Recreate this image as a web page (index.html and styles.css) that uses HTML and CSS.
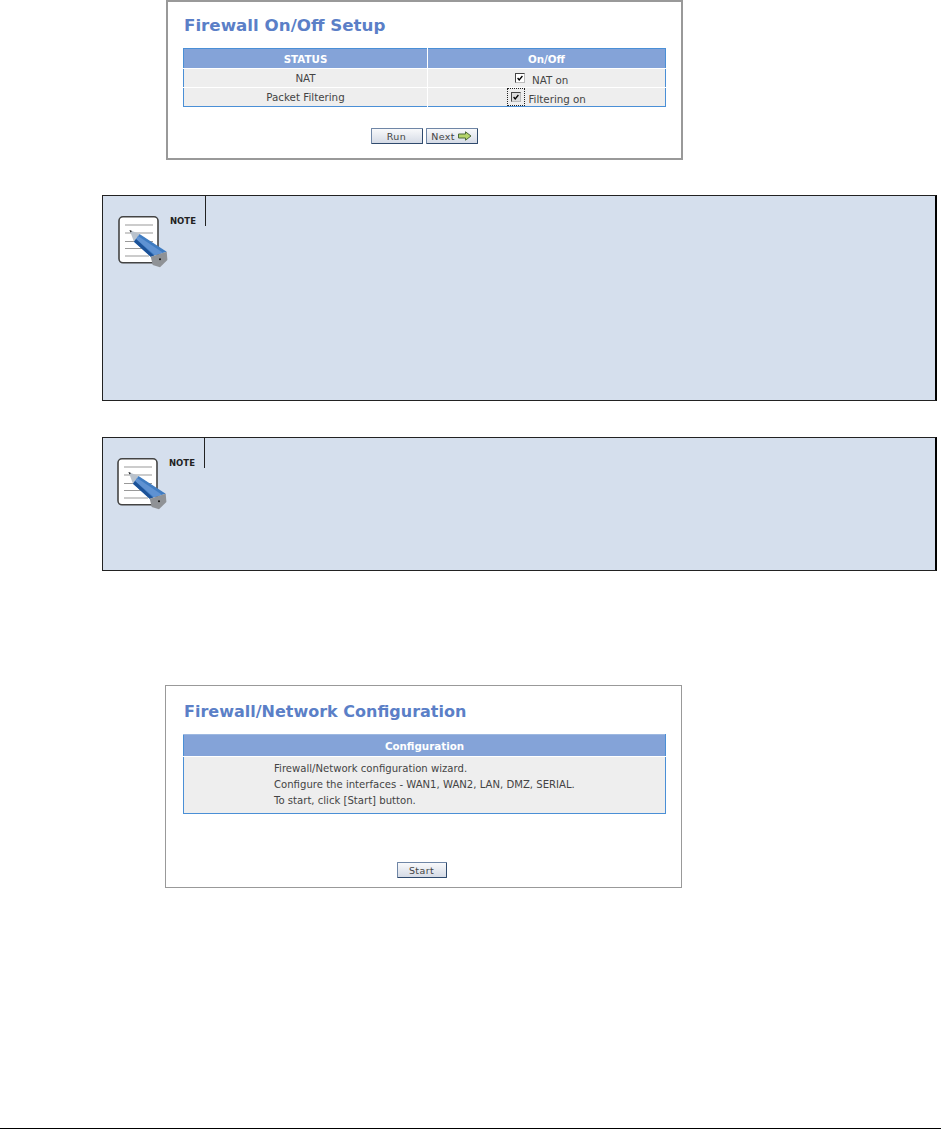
FILE: index.html
```html
<!DOCTYPE html>
<html>
  <head>
    <title>Firewall Setup</title>
    <meta charset="utf-8" />
    <link rel="stylesheet" href="styles.css">
  </head>
  <body>
    <svg class="defs" width="0" height="0">
      <symbol id="noteIcon" viewBox="0 0 52 52">
        <rect x="1" y="0.8" width="39" height="46" rx="4" fill="#fff" stroke="#444" stroke-width="1.6" />
        <path d="M7 9H35M7 17H35M7 25.5H35M7 32.5H35M7 40H31" stroke="#999" stroke-width="1" />
        <path d="M11.5 14L21.5 18L16 25.7Z" fill="#b9c2cc" />
        <path d="M11.5 14L14 15L12.5 16.5Z" fill="#222" />
        <path d="M21.5 18L48.7 35.7L32.7 40.7L16 25.7Z" fill="#3f7cc2" />
        <path d="M20 20L45 36.8L37 39.2L18 23Z" fill="#5f92d2" />
        <path d="M16 25.7L32.7 40.7L36 39.7L18 23Z" fill="#1c5298" />
        <path d="M48.7 35.7L49.4 44L42 51.3L34.7 49L32.7 40.7Z" fill="#8f9296" />
        <circle cx="42" cy="43.3" r="1" fill="#111" />
      </symbol>
    </svg>

    <div class="panel panel-firewall">
      <h2 class="panel-title">Firewall On/Off Setup</h2>
      <table class="grid grid-status">
        <thead>
          <tr>
            <th>STATUS</th>
            <th>On/Off</th>
          </tr>
        </thead>
        <tbody>
          <tr>
            <td>NAT</td>
            <td>
              <span class="check">
                <svg class="check-box" width="10" height="10" viewBox="0 0 10 10">
                  <path d="M2 5L4 7.5L8 2.5" fill="none" stroke="#000" stroke-width="1.6" />
                </svg>
              </span>
              <span class="check-text check-label">NAT on</span>
            </td>
          </tr>
          <tr>
            <td>Packet Filtering</td>
            <td>
              <span class="check check-focus">
                <svg class="check-box" width="10" height="10" viewBox="0 0 10 10">
                  <path d="M2 5L4 7.5L8 2.5" fill="none" stroke="#000" stroke-width="1.6" />
                </svg>
              </span>
              <span class="check-text">Filtering on</span>
            </td>
          </tr>
        </tbody>
      </table>
      <div class="actions">
        <button class="btn" type="button">Run</button>
        <button class="btn" type="button">
          Next
          <svg class="btn-arrow" width="14" height="10" viewBox="0 0 14 10">
            <path d="M0.5 3H7.5V0.8L13 5L7.5 9.2V7H0.5Z" fill="#b5d56a" stroke="#4d6a3a" />
          </svg>
        </button>
      </div>
    </div>

    <div class="note note-long">
      <div class="note-head">
        <svg class="note-icon" width="52" height="52"><use href="#noteIcon" /></svg>
        <span class="note-label">NOTE</span>
      </div>
    </div>

    <div class="note note-short">
      <div class="note-head">
        <svg class="note-icon" width="52" height="52"><use href="#noteIcon" /></svg>
        <span class="note-label">NOTE</span>
      </div>
    </div>

    <div class="panel panel-config">
      <h2 class="panel-title">Firewall/Network Configuration</h2>
      <table class="grid grid-config">
        <thead>
          <tr>
            <th>Configuration</th>
          </tr>
        </thead>
        <tbody>
          <tr>
            <td>
              <p>Firewall/Network configuration wizard.</p>
              <p>Configure the interfaces - WAN1, WAN2, LAN, DMZ, SERIAL.</p>
              <p>To start, click [Start] button.</p>
            </td>
          </tr>
        </tbody>
      </table>
      <div class="actions">
        <button class="btn" type="button">Start</button>
      </div>
    </div>

    <hr class="page-rule" />
  </body>
</html>
```

FILE: styles.css
```css
html {
  height: 100%;
}

body {
  margin: 0;
  min-height: 100%;
  display: flex;
  flex-direction: column;
  background: #fff;
  color: #444;
  font-family: "DejaVu Sans", Verdana, sans-serif;
  font-size: 10.3px;
}

.defs {
  display: block;
  height: 0;
}

/* Panels */

.panel {
  box-sizing: border-box;
  width: 517px;
  border: 1px solid #999;
  background: #fff;
  padding: 0 17px;
}

.panel-firewall {
  height: 160px;
  margin-left: 166px;
  border-width: 2px;
  padding: 0 15px;
}

.panel-config {
  height: 203px;
  margin: 114px 0 0 165px;
}

.panel-title {
  margin: 0;
  padding-left: 1px;
  color: #5b7fc7;
  font-size: 16.7px;
  line-height: 20px;
}

.panel-firewall .panel-title {
  padding-top: 13px;
}

.panel-config .panel-title {
  padding-top: 16px;
  font-size: 16px;
}

/* Tables */

.grid {
  border-collapse: collapse;
  border: 1px solid #4a8fd6;
}

.grid th {
  padding: 0;
  background: #84a3d8;
  color: #fff;
  font-weight: bold;
  text-align: center;
}

.grid td {
  padding: 0;
  background: #eee;
  text-align: center;
  border-top: 1px solid #fff;
}

.grid-status {
  width: 483px;
  margin-top: 13px;
}

.grid-status th {
  height: 19px;
}

.grid-status th + th,
.grid-status td + td {
  border-left: 1px solid #fff;
}

.grid-status th:first-child,
.grid-status td:first-child {
  width: 243px;
}

.grid-status td {
  height: 18px;
}

.grid-config {
  width: 483px;
  margin-top: 12px;
  border-top-color: #9db8e0;
}

.grid-config th {
  height: 21px;
}

.grid-config td {
  height: 56px;
  padding-left: 90px;
  text-align: left;
}

.grid-config p {
  margin: 0;
  font-size: 10.1px;
  line-height: 16px;
}

/* Checkboxes */

.check {
  display: inline-flex;
  align-items: center;
  justify-content: center;
  width: 18px;
  height: 18px;
  vertical-align: middle;
}

.check-focus {
  outline: 1px dotted #222;
  outline-offset: -1px;
}

.check-box {
  box-sizing: border-box;
  border: 1px solid #444;
  border-right-color: #bbb;
  border-bottom-color: #bbb;
  background: #fff;
}

.check-focus .check-box {
  background: #ddd;
}

.check-text {
  display: inline-block;
  padding-top: 3px;
  vertical-align: middle;
}

.check-label {
  margin-right: 14px;
}

/* Buttons */

.actions {
  display: flex;
  justify-content: center;
  gap: 3px;
}

.panel-firewall .actions {
  margin-top: 21px;
  padding-right: 1px;
}

.panel-config .actions {
  margin-top: 48px;
  padding-right: 4px;
}

.btn {
  box-sizing: border-box;
  display: inline-flex;
  align-items: center;
  justify-content: center;
  gap: 3px;
  width: 52px;
  height: 16px;
  padding: 0;
  border: 1px solid #2f4a6d;
  border-top-color: #6f86a6;
  border-left-color: #6f86a6;
  border-radius: 1px;
  background: linear-gradient(#f8f9fb, #d5dbe6);
  color: #444;
  font-family: inherit;
  font-size: 9.5px;
  letter-spacing: 0.4px;
}

.panel-config .btn {
  width: 50px;
}

/* Notes */

.note {
  box-sizing: border-box;
  width: 835px;
  margin-left: 102px;
  border: 1px solid #222;
  border-right: 2px solid #000;
  background: #d5dfed;
}

.note-long {
  height: 206px;
  margin-top: 35px;
}

.note-short {
  height: 134px;
  margin-top: 36px;
}

.note-head {
  display: flex;
  align-items: flex-start;
  width: 103px;
  height: 30px;
  box-sizing: border-box;
  border-right: 1px solid #222;
}

.note-short .note-head {
  width: 102px;
}

.note-icon {
  flex: none;
  margin: 20px 0 0 15px;
}

.note-short .note-icon {
  margin-left: 14px;
}

.note-label {
  margin: 20px 0 0 0;
  color: #222;
  font-size: 8.5px;
  font-weight: bold;
  line-height: 10px;
}

.page-rule {
  width: 100%;
  height: 1px;
  margin: auto 0 0;
  border: 0;
  background: #000;
}
```
